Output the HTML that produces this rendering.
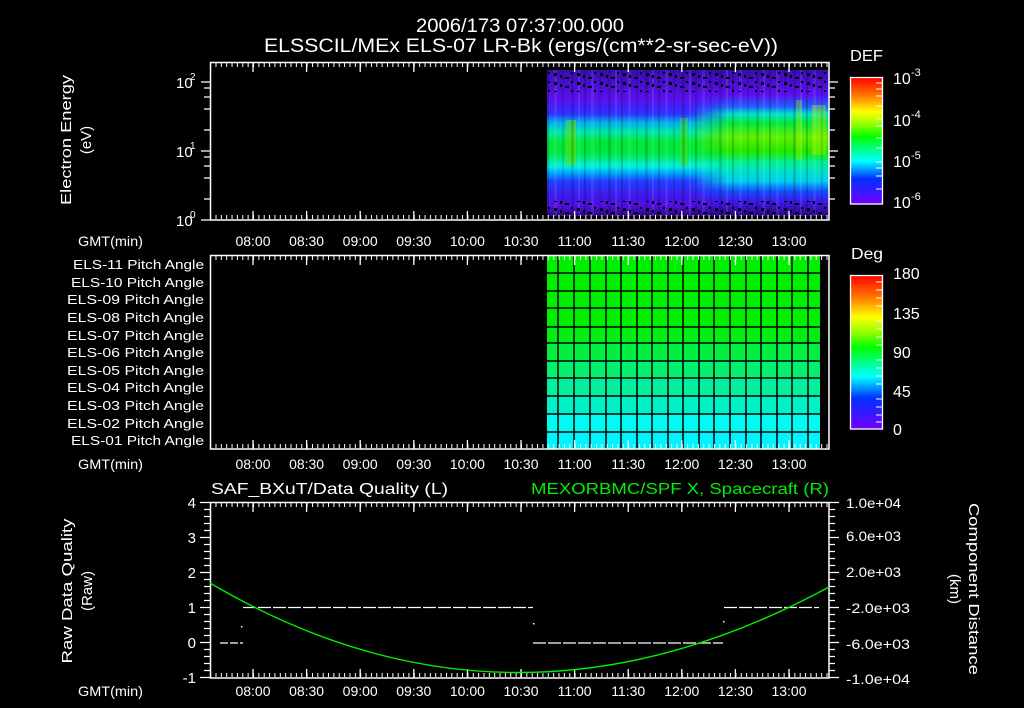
<!DOCTYPE html>
<html><head><meta charset="utf-8"><style>
html,body{margin:0;padding:0;background:#000;}
svg{display:block;}
text{font-family:"Liberation Sans",sans-serif;fill:#fff;}
</style></head><body>
<svg width="1024" height="708" viewBox="0 0 1024 708" xmlns="http://www.w3.org/2000/svg">
<defs>
<linearGradient id="cb" x1="0" y1="0" x2="0" y2="1">
<stop offset="0" stop-color="#ff0000"/><stop offset="0.15" stop-color="#ff8000"/><stop offset="0.27" stop-color="#ffff00"/><stop offset="0.36" stop-color="#a0ff00"/><stop offset="0.47" stop-color="#00ff00"/><stop offset="0.56" stop-color="#00ff80"/><stop offset="0.66" stop-color="#00ffff"/><stop offset="0.8" stop-color="#0030ff"/><stop offset="1" stop-color="#7000ff"/>
</linearGradient>
<linearGradient id="spL" x1="0" y1="70" x2="0" y2="216" gradientUnits="userSpaceOnUse">
<stop offset="0" stop-color="#3a0cb0"/><stop offset="0.2" stop-color="#5a10f0"/><stop offset="0.3" stop-color="#3030ff"/><stop offset="0.36" stop-color="#00b0f0"/><stop offset="0.43" stop-color="#00e8a0"/><stop offset="0.5" stop-color="#00e830"/><stop offset="0.58" stop-color="#00e850"/><stop offset="0.66" stop-color="#00f0e0"/><stop offset="0.72" stop-color="#0090ff"/><stop offset="0.76" stop-color="#2040ff"/><stop offset="0.86" stop-color="#4018f0"/><stop offset="0.93" stop-color="#5010e0"/><stop offset="1" stop-color="#2a0880"/>
</linearGradient>
<linearGradient id="spR" x1="0" y1="70" x2="0" y2="216" gradientUnits="userSpaceOnUse">
<stop offset="0" stop-color="#3a0cb0"/><stop offset="0.17" stop-color="#5a10f0"/><stop offset="0.25" stop-color="#2060ff"/><stop offset="0.3" stop-color="#00e0d0"/><stop offset="0.36" stop-color="#00e840"/><stop offset="0.46" stop-color="#60f000"/><stop offset="0.56" stop-color="#20e800"/><stop offset="0.64" stop-color="#00f0a0"/><stop offset="0.76" stop-color="#00d0f0"/><stop offset="0.83" stop-color="#1050ff"/><stop offset="0.9" stop-color="#4018f0"/><stop offset="1" stop-color="#2a0880"/>
</linearGradient>
<linearGradient id="fadeX" x1="0" y1="0" x2="1" y2="0"><stop offset="0" stop-color="#fff" stop-opacity="0"/><stop offset="1" stop-color="#fff" stop-opacity="1"/></linearGradient>
<mask id="mk"><rect x="690" y="60" width="40" height="160" fill="url(#fadeX)"/></mask>
<pattern id="minT" x="253" y="0" width="5.36" height="10" patternUnits="userSpaceOnUse"><rect x="0" y="0" width="1" height="10" fill="#fff"/></pattern>
<pattern id="speck" x="0" y="0" width="23" height="9" patternUnits="userSpaceOnUse"><rect x="2" y="1" width="3" height="3" fill="#000"/><rect x="13" y="5" width="4" height="2" fill="#000"/><rect x="8" y="3" width="2" height="3" fill="#000"/><rect x="19" y="0" width="2" height="2" fill="#000"/></pattern>
<pattern id="streak" x="547" y="0" width="37" height="10" patternUnits="userSpaceOnUse"><rect x="0" y="0" width="2" height="10" fill="#000" opacity="0.18"/><rect x="7" y="0" width="3" height="10" fill="#fff" opacity="0.08"/><rect x="15" y="0" width="2" height="10" fill="#000" opacity="0.12"/><rect x="24" y="0" width="3" height="10" fill="#000" opacity="0.15"/><rect x="31" y="0" width="2" height="10" fill="#fff" opacity="0.1"/></pattern>
</defs>

<!-- Titles -->
<text x="416" y="32" font-size="19" textLength="208" lengthAdjust="spacingAndGlyphs">2006/173 07:37:00.000</text>
<text x="264" y="52" font-size="19" textLength="514" lengthAdjust="spacingAndGlyphs">ELSSCIL/MEx ELS-07 LR-Bk  (ergs/(cm**2-sr-sec-eV))</text>

<!-- Panel 1 spectrogram -->
<rect x="547" y="70" width="282" height="146" fill="url(#spL)"/>
<rect x="690" y="70" width="139" height="146" fill="url(#spR)" mask="url(#mk)"/>
<rect x="730" y="70" width="99" height="146" fill="url(#spR)"/>
<rect x="566" y="120" width="10" height="45" fill="#70e000" opacity="0.5"/>
<rect x="680" y="118" width="8" height="48" fill="#60e000" opacity="0.4"/>
<rect x="796" y="100" width="6" height="60" fill="#a0f000" opacity="0.35"/>
<rect x="812" y="105" width="14" height="50" fill="#b0f000" opacity="0.4"/>
<rect x="547" y="70" width="282" height="146" fill="url(#streak)"/>
<rect x="547" y="70" width="282" height="22" fill="url(#speck)"/>
<rect x="547" y="201" width="282" height="15" fill="url(#speck)"/>

<!-- Panel 1 axes -->
<rect x="210.5" y="62.5" width="618.5" height="157.5" fill="none" stroke="#fff" stroke-width="1.5"/>
<rect x="210" y="63" width="619" height="4" fill="url(#minT)"/>
<rect x="210" y="215" width="619" height="4" fill="url(#minT)"/>
<path stroke="#fff" stroke-width="1.3" d="M253 63v9M306.6 63v9M360.2 63v9M413.8 63v9M467.4 63v9M521 63v9M574.6 63v9M628.2 63v9M681.8 63v9M735.4 63v9M789 63v9M253 220v-9M306.6 220v-9M360.2 220v-9M413.8 220v-9M467.4 220v-9M521 220v-9M574.6 220v-9M628.2 220v-9M681.8 220v-9M735.4 220v-9M789 220v-9"/>
<path stroke="#fff" stroke-width="1.3" d="M201 82h9M204 88h6M204 97h6M204 109h6M204 130h6M201 151h9M204 157h6M204 166h6M204 178h6M204 199h6M201 220h9M829 82h9M829 88h6M829 97h6M829 109h6M829 130h6M829 151h9M829 157h6M829 166h6M829 178h6M829 199h6"/>
<text x="176" y="88" font-size="15">10</text><text x="190" y="80" font-size="10">2</text>
<text x="176" y="157" font-size="15">10</text><text x="190" y="149" font-size="10">1</text>
<text x="176" y="226" font-size="15">10</text><text x="190" y="218" font-size="10">0</text>
<text transform="translate(71,140) rotate(-90)" font-size="15" text-anchor="middle" textLength="130" lengthAdjust="spacingAndGlyphs">Electron Energy</text>
<text transform="translate(91,140) rotate(-90)" font-size="15" text-anchor="middle">(eV)</text>

<!-- Colorbar 1 -->
<text x="850" y="61" font-size="16" textLength="33" lengthAdjust="spacingAndGlyphs">DEF</text>
<rect x="850.5" y="77.5" width="32" height="126.5" fill="url(#cb)" stroke="#fff" stroke-width="1.3"/>
<path stroke="#fff" stroke-width="1" d="M876 83h6M876 89h6M876 96h6M876 106h6M876 119h6M876 126h6M876 138h6M876 148h6M876 162h6M876 168h6M876 176h6M876 189h6"/>
<text x="893" y="84" font-size="16">10</text><text x="911" y="76" font-size="11">-3</text>
<text x="893" y="126" font-size="16">10</text><text x="911" y="118" font-size="11">-4</text>
<text x="893" y="167" font-size="16">10</text><text x="911" y="159" font-size="11">-5</text>
<text x="893" y="208" font-size="16">10</text><text x="911" y="200" font-size="11">-6</text>

<!-- time labels -->
<g font-size="14">
<text x="78" y="246" textLength="65" lengthAdjust="spacingAndGlyphs">GMT(min)</text>
<text x="78" y="469" textLength="65" lengthAdjust="spacingAndGlyphs">GMT(min)</text>
<text x="78" y="696" textLength="65" lengthAdjust="spacingAndGlyphs">GMT(min)</text>
</g>
<g font-size="14" text-anchor="middle">
<text x="253" y="246">08:00</text><text x="306.6" y="246">08:30</text><text x="360.2" y="246">09:00</text><text x="413.8" y="246">09:30</text><text x="467.4" y="246">10:00</text><text x="521" y="246">10:30</text><text x="574.6" y="246">11:00</text><text x="628.2" y="246">11:30</text><text x="681.8" y="246">12:00</text><text x="735.4" y="246">12:30</text><text x="789" y="246">13:00</text>
<text x="253" y="469">08:00</text><text x="306.6" y="469">08:30</text><text x="360.2" y="469">09:00</text><text x="413.8" y="469">09:30</text><text x="467.4" y="469">10:00</text><text x="521" y="469">10:30</text><text x="574.6" y="469">11:00</text><text x="628.2" y="469">11:30</text><text x="681.8" y="469">12:00</text><text x="735.4" y="469">12:30</text><text x="789" y="469">13:00</text>
<text x="253" y="696">08:00</text><text x="306.6" y="696">08:30</text><text x="360.2" y="696">09:00</text><text x="413.8" y="696">09:30</text><text x="467.4" y="696">10:00</text><text x="521" y="696">10:30</text><text x="574.6" y="696">11:00</text><text x="628.2" y="696">11:30</text><text x="681.8" y="696">12:00</text><text x="735.4" y="696">12:30</text><text x="789" y="696">13:00</text>
</g>

<!-- Panel 2 pitch -->
<rect x="547" y="256" width="273" height="17" fill="#00ee00"/>
<rect x="547" y="273" width="273" height="18" fill="#00ee00"/>
<rect x="547" y="291" width="273" height="17" fill="#00ee00"/>
<rect x="547" y="308" width="273" height="19" fill="#00ee00"/>
<rect x="547" y="327" width="273" height="16" fill="#00ee10"/>
<rect x="547" y="343" width="273" height="18" fill="#00f040"/>
<rect x="547" y="361" width="273" height="17" fill="#00f070"/>
<rect x="547" y="378" width="273" height="18" fill="#00f0a0"/>
<rect x="547" y="396" width="273" height="18" fill="#00f0c8"/>
<rect x="547" y="414" width="273" height="18" fill="#00fcf0"/>
<rect x="547" y="432" width="273" height="17" fill="#00f4ff"/>
<path stroke="#000" stroke-width="1.5" d="M558 256v193M574 256v193M590 256v193M606 256v193M621 256v193M637 256v193M652 256v193M668 256v193M683 256v193M699 256v193M714 256v193M730 256v193M746 256v193M761 256v193M777 256v193M792 256v193M808 256v193M547 273h273M547 291h273M547 308h273M547 327h273M547 343h273M547 361h273M547 378h273M547 396h273M547 414h273M547 432h273"/>
<rect x="210.5" y="255.5" width="618.5" height="193.5" fill="none" stroke="#fff" stroke-width="1.5"/>
<rect x="210" y="256" width="619" height="4" fill="url(#minT)"/>
<rect x="210" y="444" width="619" height="4" fill="url(#minT)"/>
<path stroke="#fff" stroke-width="1.3" d="M253 256v9M306.6 256v9M360.2 256v9M413.8 256v9M467.4 256v9M521 256v9M574.6 256v9M628.2 256v9M681.8 256v9M735.4 256v9M789 256v9M253 449v-9M306.6 449v-9M360.2 449v-9M413.8 449v-9M467.4 449v-9M521 449v-9M574.6 449v-9M628.2 449v-9M681.8 449v-9M735.4 449v-9M789 449v-9"/>
<g font-size="13" text-anchor="end">
<text x="204" y="269" textLength="131" lengthAdjust="spacingAndGlyphs">ELS-11 Pitch Angle</text>
<text x="204" y="287" textLength="133" lengthAdjust="spacingAndGlyphs">ELS-10 Pitch Angle</text>
<text x="204" y="304" textLength="137" lengthAdjust="spacingAndGlyphs">ELS-09 Pitch Angle</text>
<text x="204" y="322" textLength="137" lengthAdjust="spacingAndGlyphs">ELS-08 Pitch Angle</text>
<text x="204" y="340" textLength="137" lengthAdjust="spacingAndGlyphs">ELS-07 Pitch Angle</text>
<text x="204" y="357" textLength="137" lengthAdjust="spacingAndGlyphs">ELS-06 Pitch Angle</text>
<text x="204" y="375" textLength="137" lengthAdjust="spacingAndGlyphs">ELS-05 Pitch Angle</text>
<text x="204" y="392" textLength="137" lengthAdjust="spacingAndGlyphs">ELS-04 Pitch Angle</text>
<text x="204" y="410" textLength="137" lengthAdjust="spacingAndGlyphs">ELS-03 Pitch Angle</text>
<text x="204" y="428" textLength="137" lengthAdjust="spacingAndGlyphs">ELS-02 Pitch Angle</text>
<text x="204" y="445" textLength="133" lengthAdjust="spacingAndGlyphs">ELS-01 Pitch Angle</text>
</g>

<!-- Colorbar 2 -->
<text x="851" y="259" font-size="16" textLength="32" lengthAdjust="spacingAndGlyphs">Deg</text>
<rect x="850.5" y="275.5" width="32" height="153.5" fill="url(#cb)" stroke="#fff" stroke-width="1.3"/>
<path stroke="#fff" stroke-width="1" d="M876 282h6M876 290h6M876 298h6M876 306h6M876 321h6M876 329h6M876 337h6M876 345h6M876 360h6M876 368h6M876 376h6M876 384h6M876 399h6M876 407h6M876 415h6M876 422h6"/>
<g font-size="16">
<text x="893" y="279">180</text><text x="893" y="319">135</text><text x="893" y="358">90</text><text x="893" y="397">45</text><text x="893" y="435">0</text>
</g>

<!-- Panel 3 -->
<text x="211" y="494" font-size="16" textLength="237" lengthAdjust="spacingAndGlyphs">SAF_BXuT/Data Quality (L)</text>
<text x="531" y="494" font-size="16" textLength="298" lengthAdjust="spacingAndGlyphs" style="fill:#00ee00">MEXORBMC/SPF X, Spacecraft (R)</text>
<rect x="210.5" y="502.5" width="618.5" height="175.5" fill="none" stroke="#fff" stroke-width="1.5"/>
<rect x="210" y="503" width="619" height="4" fill="url(#minT)"/>
<rect x="210" y="673" width="619" height="4" fill="url(#minT)"/>
<path stroke="#fff" stroke-width="1.3" d="M253 503v9M306.6 503v9M360.2 503v9M413.8 503v9M467.4 503v9M521 503v9M574.6 503v9M628.2 503v9M681.8 503v9M735.4 503v9M789 503v9M253 678v-9M306.6 678v-9M360.2 678v-9M413.8 678v-9M467.4 678v-9M521 678v-9M574.6 678v-9M628.2 678v-9M681.8 678v-9M735.4 678v-9M789 678v-9"/>
<path stroke="#fff" stroke-width="1.3" d="M200 502.5h10M204 509.5h6M204 516.5h6M204 523.5h6M204 530.5h6M200 537.5h10M204 544.5h6M204 551.5h6M204 558.5h6M204 565.5h6M200 572.5h10M204 579.5h6M204 586.5h6M204 593.5h6M204 600.5h6M200 607.5h10M204 614.5h6M204 621.5h6M204 628.5h6M204 635.5h6M200 642.5h10M204 649.5h6M204 656.5h6M204 663.5h6M204 670.5h6M200 677.5h10"/>
<path stroke="#fff" stroke-width="1.3" d="M829 502.5h10M829 509.5h6M829 516.5h6M829 523.5h6M829 530.5h6M829 537.5h10M829 544.5h6M829 551.5h6M829 558.5h6M829 565.5h6M829 572.5h10M829 579.5h6M829 586.5h6M829 593.5h6M829 600.5h6M829 607.5h10M829 614.5h6M829 621.5h6M829 628.5h6M829 635.5h6M829 642.5h10M829 649.5h6M829 656.5h6M829 663.5h6M829 670.5h6M829 677.5h10"/>
<g font-size="15" text-anchor="end">
<text x="196" y="508">4</text><text x="196" y="543">3</text><text x="196" y="578">2</text><text x="196" y="613">1</text><text x="196" y="648">0</text><text x="196" y="683">-1</text>
</g>
<g font-size="14">
<text x="846" y="508" textLength="55" lengthAdjust="spacingAndGlyphs">1.0e+04</text>
<text x="846" y="541" textLength="55" lengthAdjust="spacingAndGlyphs">6.0e+03</text>
<text x="846" y="577" textLength="55" lengthAdjust="spacingAndGlyphs">2.0e+03</text>
<text x="846" y="613" textLength="64" lengthAdjust="spacingAndGlyphs">-2.0e+03</text>
<text x="846" y="649" textLength="64" lengthAdjust="spacingAndGlyphs">-6.0e+03</text>
<text x="846" y="684" textLength="64" lengthAdjust="spacingAndGlyphs">-1.0e+04</text>
</g>
<text transform="translate(72,591) rotate(-90)" font-size="15" text-anchor="middle" textLength="145" lengthAdjust="spacingAndGlyphs">Raw Data Quality</text>
<text transform="translate(92,591) rotate(-90)" font-size="15" text-anchor="middle">(Raw)</text>
<text transform="translate(969,589) rotate(90)" font-size="15" text-anchor="middle" textLength="172" lengthAdjust="spacingAndGlyphs">Component Distance</text>
<text transform="translate(950,589) rotate(90)" font-size="15" text-anchor="middle">(km)</text>

<!-- data quality dashes -->
<path stroke="#fff" stroke-width="1.3" fill="none" stroke-dasharray="8 2" d="M220 643H243"/>
<path stroke="#fff" stroke-width="1.3" fill="none" stroke-dasharray="13 2" d="M243 607.5H533M533 643H723M724 607.5H819"/>
<rect x="241" y="626" width="1.5" height="1.5" fill="#fff"/>
<rect x="533" y="623" width="1.5" height="1.5" fill="#fff"/>
<rect x="723" y="621" width="1.5" height="1.5" fill="#fff"/>
<path stroke="#00ee00" stroke-width="1.4" fill="none" d="M210 583 Q510 760 829 587"/>
</svg>
</body></html>
